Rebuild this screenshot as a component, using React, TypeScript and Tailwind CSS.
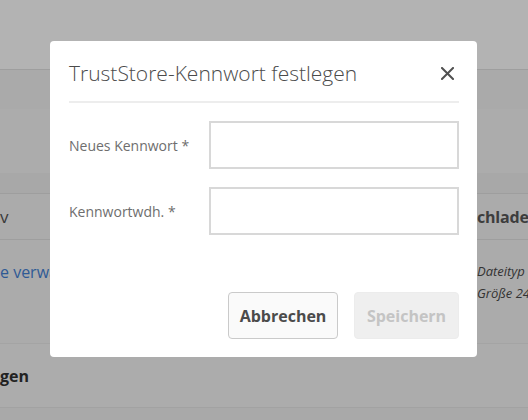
export default function App() {
  return (
    <div
      className="relative h-[420px] w-[528px] overflow-hidden bg-[#a9a9a9]"
      style={{ fontFamily: '"Open Sans", "Liberation Sans", sans-serif' }}
    >
      {/* page behind the overlay */}
      <div className="h-[70px] border-b border-[#9e9e9e] bg-[#b3b3b3]" />
      <div className="h-[39px] bg-[#aaaaaa]" />
      <div className="h-[64px] bg-[#acacac]" />
      <div className="h-[21px] border-b border-[#9e9e9e] bg-[#a8a8a8]" />
      <div className="flex h-[46px] items-center border-b border-[#9e9e9e] bg-[#ababab]">
        <div className="w-[477px] shrink-0 text-[17px] text-[#3a3a3a]">v</div>
        <div className="whitespace-nowrap text-[16px] font-bold tracking-[-0.2px] text-[#3d3d3d]">chladen</div>
      </div>
      <div className="flex h-[104px] border-b border-[#a4a4a4] bg-[#ababab] pt-[20px]">
        <div className="w-[477px] shrink-0 whitespace-nowrap text-[16px] text-[#2f5a95]">e verwalten</div>
        <div className="whitespace-nowrap text-[13px] italic leading-[22px] text-[#333333]">
          <div>Dateityp</div>
          <div>Größe 24</div>
        </div>
      </div>
      <div className="flex h-[64px] items-center border-b border-[#a2a2a2] bg-[#acacac]">
        <div className="whitespace-nowrap text-[16px] font-bold text-[#222222]">gen</div>
      </div>

      {/* dialog */}
      <div className="absolute left-[50px] top-[41px] flex h-[316px] w-[427px] flex-col rounded-[4px] bg-white pl-[19px] pr-[18px] pt-[16px] pb-[18px]">
        <div className="flex h-[32px] items-center justify-between">
          <h1 className="text-[21px] font-light leading-[32px] text-[#4b4b4b]">
            TrustStore-Kennwort festlegen
          </h1>
          <button type="button" className="mr-[4px] flex h-[16px] w-[16px] items-center justify-center">
            <svg width="13" height="13" viewBox="0 0 13 13">
              <path d="M1 1 L12 12 M12 1 L1 12" stroke="#505050" strokeWidth="2" strokeLinecap="square" />
            </svg>
          </button>
        </div>
        <div className="mt-[12px] h-[2px] bg-[#ededed]" />

        <div className="mt-[18px] flex flex-col gap-[18px]">
          <div className="flex items-center">
            <label className="w-[140px] text-[14px] text-[#6e6e6e]">Neues Kennwort *</label>
            <input type="password" className="h-[48px] w-[250px] border-2 border-[#d8d8d8] bg-white" />
          </div>
          <div className="flex items-center">
            <label className="w-[140px] text-[14px] text-[#6e6e6e]">Kennwortwdh. *</label>
            <input type="password" className="h-[48px] w-[250px] border-2 border-[#d8d8d8] bg-white" />
          </div>
        </div>

        <div className="mt-auto flex justify-end gap-[16px]">
          <button
            type="button"
            className="h-[47px] w-[110px] rounded-[4px] border border-[#cacaca] bg-[#fafafa] text-[16px] font-bold text-[#4b4b4b]"
          >
            Abbrechen
          </button>
          <button
            type="button"
            disabled
            className="h-[47px] w-[105px] rounded-[4px] border border-[#ececec] bg-[#efefef] text-[16px] font-bold text-[#c4c4c4]"
          >
            Speichern
          </button>
        </div>
      </div>
    </div>
  );
}
